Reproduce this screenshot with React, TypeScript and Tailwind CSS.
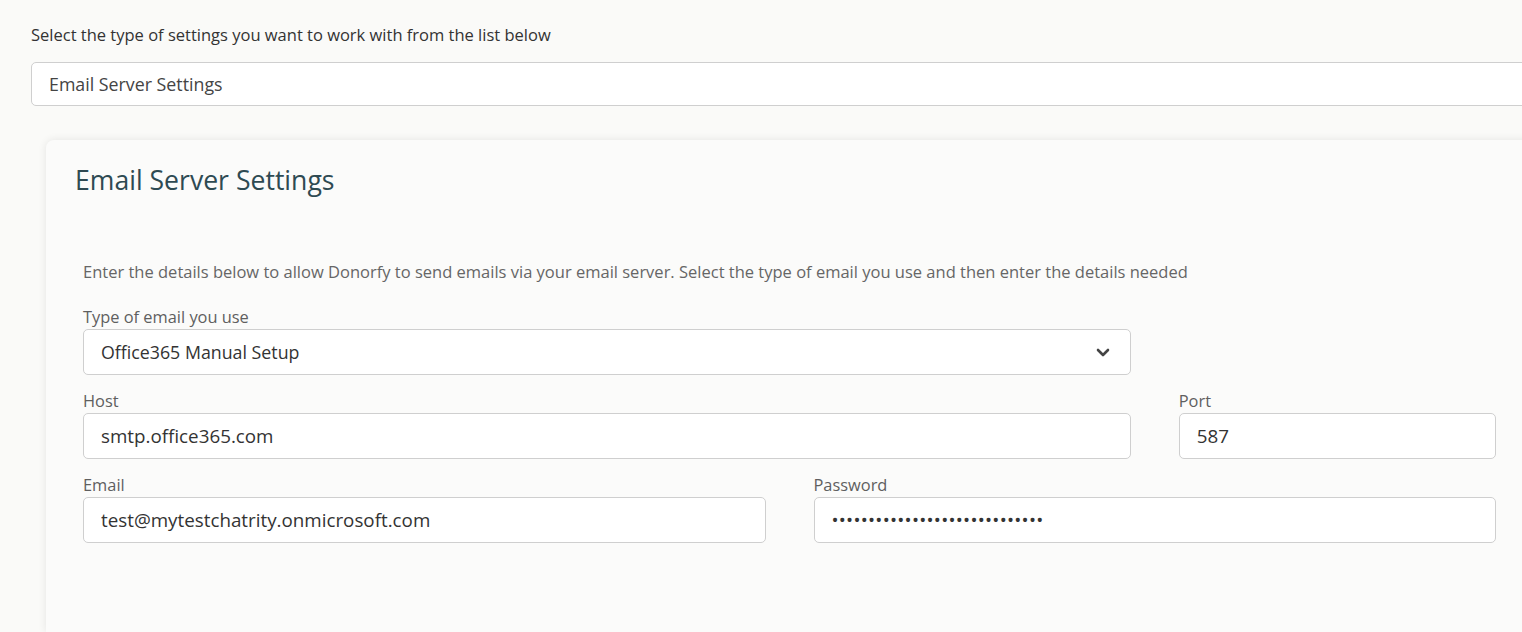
import { useState } from 'react';

const font = { fontFamily: '"Open Sans", "Noto Sans", Arial, sans-serif' };

function Field({ label, children, className = '' }: { label: string; children: React.ReactNode; className?: string }) {
  return (
    <div className={`mb-[16px] ${className}`}>
      <label className="block text-[16.4px] leading-[19px] mb-[3px] text-[#5f5f5f]">{label}</label>
      {children}
    </div>
  );
}

const inputCls =
  'block w-full h-[46px] rounded-[5px] border border-[#cfcfcf] bg-white px-[17px] text-[18.8px] text-[#333] outline-none';

export default function App() {
  const [type] = useState('Office365 Manual Setup');

  return (
    <div className="h-[632px] w-full overflow-hidden bg-[#fafaf8]" style={font}>
      <div className="pl-[31px] pt-[24px]">
        <p className="text-[16.5px] leading-[22px] text-[#333]">
          Select the type of settings you want to work with from the list below
        </p>
        <div className="mt-[16px] flex h-[44px] w-[1520px] items-center rounded-[5px] border border-[#cfcfcf] bg-white px-[17px] text-[17.8px] text-[#444]">
          Email Server Settings
        </div>
      </div>

      {/* Settings card */}
      <div className="ml-[46px] mt-[34px] w-[1487px] rounded-tl-[8px] bg-[#fbfbfa] pb-[73px] shadow-[0_0_8px_rgba(0,0,0,0.09)]">
        <h2 className="pl-[29px] pt-[21px] text-[26.6px] leading-[38px] text-[#2e4a52]">Email Server Settings</h2>

        <div className="px-[37px] pt-[62px]">
          <p className="text-[16.5px] leading-[22px] text-[#666]">
            Enter the details below to allow Donorfy to send emails via your email server. Select the type of email you
            use and then enter the details needed
          </p>

          <div className="mt-[24px] grid grid-cols-12 gap-x-[48px]">
            <Field label="Type of email you use" className="col-span-9">
              <div className={`${inputCls} flex items-center justify-between !text-[17.8px]`}>
                <span>{type}</span>
                <svg width="14" height="9" viewBox="0 0 14 9" className="mr-[3px]">
                  <polyline points="2,2 7,7 12,2" fill="none" stroke="#444" strokeWidth="2.6" strokeLinecap="round" strokeLinejoin="round" />
                </svg>
              </div>
            </Field>
            <div className="col-span-3" />

            <Field label="Host" className="col-span-9">
              <input className={inputCls} style={font} defaultValue="smtp.office365.com" readOnly />
            </Field>
            <Field label="Port" className="col-span-3">
              <input className={inputCls} style={font} defaultValue="587" readOnly />
            </Field>

            <Field label="Email" className="col-span-6">
              <input className={inputCls} style={font} defaultValue="test@mytestchatrity.onmicrosoft.com" readOnly />
            </Field>
            <Field label="Password" className="col-span-6">
              <input
                type="password"
                className={`${inputCls} tracking-[0.25px]`}
                style={font}
                defaultValue="abcdefghijklmnopqrstuvwxyz123"
                readOnly
              />
            </Field>
          </div>
        </div>
      </div>
    </div>
  );
}
